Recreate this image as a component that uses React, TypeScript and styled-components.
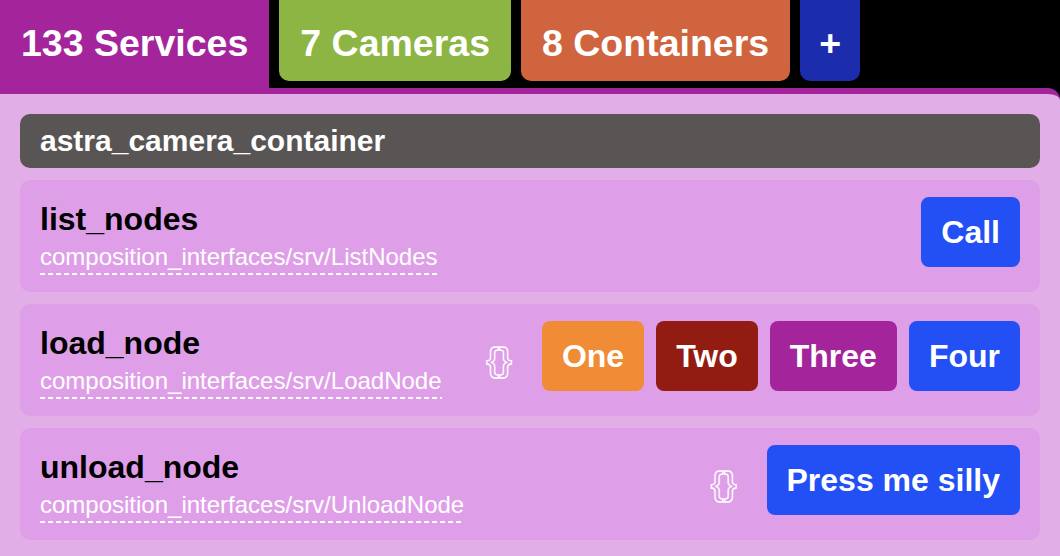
import React from "react";
import styled, { createGlobalStyle } from "styled-components";

const Global = createGlobalStyle`
  html, body {
    margin: 0;
    padding: 0;
    background: #000;
    font-family: "Liberation Sans", Arial, Helvetica, sans-serif;
    overflow: hidden;
  }
`;

const Page = styled.div`
  width: 1060px;
  height: 556px;
  background: #000;
  display: flex;
  flex-direction: column;
`;

const TabBar = styled.div`
  display: flex;
  align-items: flex-start;
  gap: 10px;
  height: 88px;
`;

const Tab = styled.div<{ $bg: string; $active?: boolean; $narrow?: boolean }>`
  box-sizing: border-box;
  height: ${(p) => (p.$active ? "88px" : "81px")};
  padding: 22px ${(p) => (p.$narrow ? "19px" : "21px")} 0;
  background: ${(p) => p.$bg};
  color: #fff;
  font-size: 37.5px;
  font-weight: 700;
  line-height: 42px;
  white-space: nowrap;
  border-radius: ${(p) => (p.$active ? "0" : "0 0 10px 10px")};
`;

const Panel = styled.div`
  flex: 1;
  background: #e1aee7;
  border-top: 6px solid #a3249b;
  border-top-right-radius: 12px;
  padding: 20px;
  display: flex;
  flex-direction: column;
  gap: 12px;
`;

const Header = styled.div`
  box-sizing: border-box;
  height: 54px;
  padding: 0 20px;
  display: flex;
  align-items: center;
  background: #5a5555;
  border-radius: 10px;
  color: #fff;
  font-size: 30px;
  font-weight: 700;
`;

const Row = styled.div`
  box-sizing: border-box;
  height: 112px;
  padding: 0 20px;
  display: flex;
  align-items: center;
  background: #df9fe8;
  border-radius: 10px;
`;

const Info = styled.div`
  flex: 1;
  display: flex;
  flex-direction: column;
  align-items: flex-start;
  padding-top: 2px;
`;

const Title = styled.div`
  font-size: 32px;
  font-weight: 700;
  line-height: 40px;
  color: #000;
`;

const TypeName = styled.span`
  display: inline-block;
  margin-top: 3px;
  padding-bottom: 3px;
  font-size: 24px;
  line-height: 30px;
  color: #fff;
  background-image: linear-gradient(to right, #fff 5px, transparent 5px);
  background-size: 8px 2px;
  background-repeat: repeat-x;
  background-position: 0 100%;
`;

const Actions = styled.div`
  display: flex;
  align-items: center;
  gap: 12px;
`;

const Braces = styled.span`
  margin-right: 18px;
  font-size: 33px;
  font-weight: 700;
  line-height: 30px;
  color: transparent;
  -webkit-text-stroke: 1.3px #fff;
`;

const Button = styled.button<{ $bg: string }>`
  box-sizing: border-box;
  height: 70px;
  margin-bottom: 8px;
  padding: 0 20px;
  border: none;
  border-radius: 8px;
  background: ${(p) => p.$bg};
  color: #fff;
  font-family: inherit;
  font-size: 32px;
  font-weight: 700;
  white-space: nowrap;
`;

const BLUE = "#2250f4";

type Svc = {
  name: string;
  type: string;
  braces?: boolean;
  buttons: { label: string; bg: string }[];
};

const services: Svc[] = [
  {
    name: "list_nodes",
    type: "composition_interfaces/srv/ListNodes",
    buttons: [{ label: "Call", bg: BLUE }],
  },
  {
    name: "load_node",
    type: "composition_interfaces/srv/LoadNode",
    braces: true,
    buttons: [
      { label: "One", bg: "#ef8c35" },
      { label: "Two", bg: "#921b12" },
      { label: "Three", bg: "#a3249b" },
      { label: "Four", bg: BLUE },
    ],
  },
  {
    name: "unload_node",
    type: "composition_interfaces/srv/UnloadNode",
    braces: true,
    buttons: [{ label: "Press me silly", bg: BLUE }],
  },
];

export default function App() {
  return (
    <>
      <Global />
      <Page>
        <TabBar>
          <Tab $bg="#a3249b" $active>
            133 Services
          </Tab>
          <Tab $bg="#8db544">7 Cameras</Tab>
          <Tab $bg="#cf643e">8 Containers</Tab>
          <Tab $bg="#1b2cad" $narrow>
            +
          </Tab>
        </TabBar>
        <Panel>
          <Header>astra_camera_container</Header>
          {services.map((s) => (
            <Row key={s.name}>
              <Info>
                <Title>{s.name}</Title>
                <TypeName>{s.type}</TypeName>
              </Info>
              <Actions>
                {s.braces && <Braces>{"{}"}</Braces>}
                {s.buttons.map((b) => (
                  <Button key={b.label} $bg={b.bg}>
                    {b.label}
                  </Button>
                ))}
              </Actions>
            </Row>
          ))}
        </Panel>
      </Page>
    </>
  );
}
